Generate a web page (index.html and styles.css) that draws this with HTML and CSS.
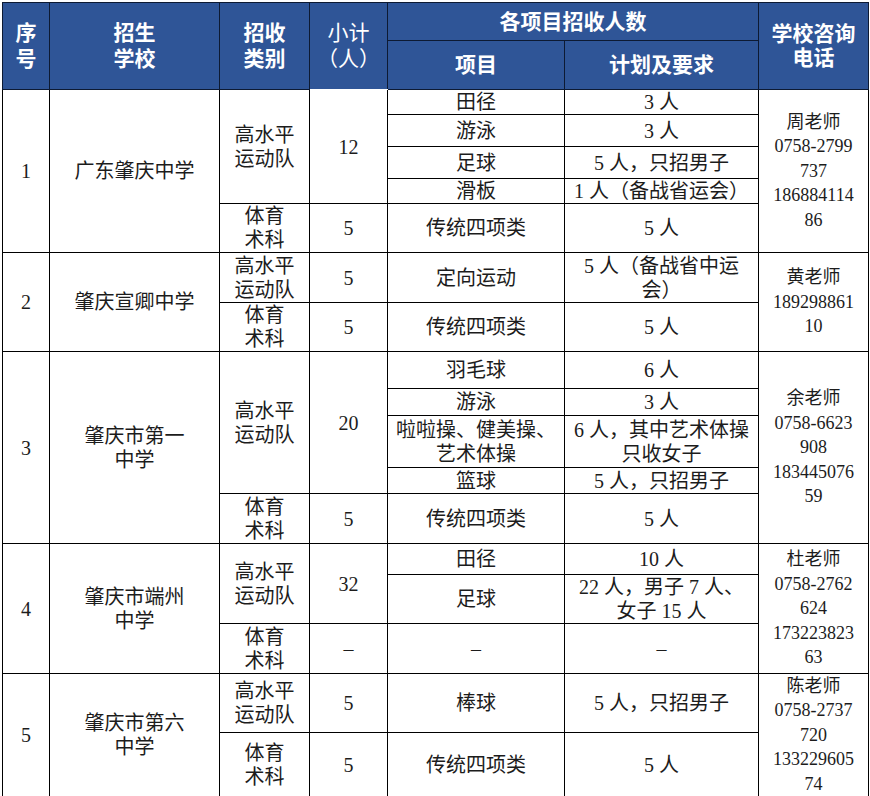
FILE: index.html
```html
<!DOCTYPE html>
<html lang="zh-CN">
<head>
<meta charset="utf-8">
<title>招生计划</title>
<link rel="stylesheet" href="styles.css">
</head>
<body>
<div class="wrap">
<table class="plan">
  <colgroup>
    <col class="c1"><col class="c2"><col class="c3"><col class="c4"><col class="c5"><col class="c6"><col class="c7">
  </colgroup>
  <thead>
    <tr class="h1">
      <th rowspan="2">序<br>号</th>
      <th rowspan="2">招生<br>学校</th>
      <th rowspan="2">招收<br>类别</th>
      <th rowspan="2" class="light">小计<br>（人）</th>
      <th colspan="2" class="group">各项目招收人数</th>
      <th rowspan="2" class="tight">学校咨询<br>电话</th>
    </tr>
    <tr class="h2">
      <th>项目</th>
      <th>计划及要求</th>
    </tr>
  </thead>
  <tbody>
    <tr class="r25">
      <td rowspan="5">1</td>
      <td rowspan="5">广东肇庆中学</td>
      <td rowspan="4">高水平<br>运动队</td>
      <td rowspan="4">12</td>
      <td>田径</td>
      <td>3 人</td>
      <td rowspan="5" class="phone">周老师<br>0758-2799<br>737<br>186884114<br>86</td>
    </tr>
    <tr class="r32"><td>游泳</td><td>3 人</td></tr>
    <tr class="r32"><td>足球</td><td>5 人，只招男子</td></tr>
    <tr class="r25"><td>滑板</td><td>1 人（备战省运会）</td></tr>
    <tr class="r49"><td>体育<br>术科</td><td>5</td><td>传统四项类</td><td>5 人</td></tr>

    <tr class="r50">
      <td rowspan="2">2</td>
      <td rowspan="2">肇庆宣卿中学</td>
      <td>高水平<br>运动队</td>
      <td>5</td>
      <td>定向运动</td>
      <td>5 人（备战省中运<br>会）</td>
      <td rowspan="2" class="phone">黄老师<br>189298861<br>10</td>
    </tr>
    <tr class="r49"><td>体育<br>术科</td><td>5</td><td>传统四项类</td><td>5 人</td></tr>

    <tr class="r37">
      <td rowspan="5">3</td>
      <td rowspan="5">肇庆市第一<br>中学</td>
      <td rowspan="4">高水平<br>运动队</td>
      <td rowspan="4">20</td>
      <td>羽毛球</td>
      <td>6 人</td>
      <td rowspan="5" class="phone">余老师<br>0758-6623<br>908<br>183445076<br>59</td>
    </tr>
    <tr class="r27"><td>游泳</td><td>3 人</td></tr>
    <tr class="r52"><td>啦啦操、健美操、<br>艺术体操</td><td>6 人，其中艺术体操<br>只收女子</td></tr>
    <tr class="r26"><td>篮球</td><td>5 人，只招男子</td></tr>
    <tr class="r50"><td>体育<br>术科</td><td>5</td><td>传统四项类</td><td>5 人</td></tr>

    <tr class="r31">
      <td rowspan="3">4</td>
      <td rowspan="3">肇庆市端州<br>中学</td>
      <td rowspan="2">高水平<br>运动队</td>
      <td rowspan="2">32</td>
      <td>田径</td>
      <td>10 人</td>
      <td rowspan="3" class="phone">杜老师<br>0758-2762<br>624<br>173223823<br>63</td>
    </tr>
    <tr class="r49"><td>足球</td><td>22 人，男子 7 人、<br>女子 15 人</td></tr>
    <tr class="r50"><td>体育<br>术科</td><td>–</td><td>–</td><td>–</td></tr>

    <tr class="r59">
      <td rowspan="2">5</td>
      <td rowspan="2">肇庆市第六<br>中学</td>
      <td>高水平<br>运动队</td>
      <td>5</td>
      <td>棒球</td>
      <td>5 人，只招男子</td>
      <td rowspan="2" class="phone">陈老师<br>0758-2737<br>720<br>133229605<br>74</td>
    </tr>
    <tr class="r63"><td>体育<br>术科</td><td>5</td><td>传统四项类</td><td>5 人</td></tr>
  </tbody>
</table>
</div>
</body>
</html>
```
FILE: styles.css
```css
html, body {
  margin: 0;
  padding: 0;
  background: #ffffff;
}

.wrap {
  padding: 2px 0 0 2px;
}

.plan {
  border-collapse: collapse;
  table-layout: fixed;
  width: 866px;
  font-family: "Liberation Serif", "Noto Sans CJK SC", serif;
  font-size: 20px;
  color: #1c1c1c;
}

.c1 { width: 47px; }
.c2 { width: 170px; }
.c3 { width: 90px; }
.c4 { width: 78px; }
.c5 { width: 177px; }
.c6 { width: 194px; }
.c7 { width: 110px; }

.plan th,
.plan td {
  border: 1px solid #000000;
  padding: 0;
  text-align: center;
  vertical-align: middle;
  overflow: hidden;
}

.plan th {
  background: #2f5597;
  color: #ffffff;
  font-family: "Liberation Sans", "Noto Sans CJK SC", sans-serif;
  font-weight: 700;
  font-size: 21px;
  line-height: 26px;
  border-color: #0d1a33;
}

.plan th.light {
  font-weight: 400;
  border-bottom-color: #ffffff;
}

.plan th.tight {
  line-height: 24px;
}

.plan td {
  line-height: 24px;
  white-space: nowrap;
}

.plan td.phone {
  font-size: 18px;
  line-height: 24.4px;
}

.h1 { height: 38px; }
.h2 { height: 49px; }
.r25 { height: 25px; }
.r26 { height: 26px; }
.r27 { height: 27px; }
.r31 { height: 31px; }
.r32 { height: 32px; }
.r37 { height: 37px; }
.r49 { height: 49px; }
.r50 { height: 50px; }
.r52 { height: 52px; }
.r59 { height: 59px; }
.r63 { height: 63px; }
```
